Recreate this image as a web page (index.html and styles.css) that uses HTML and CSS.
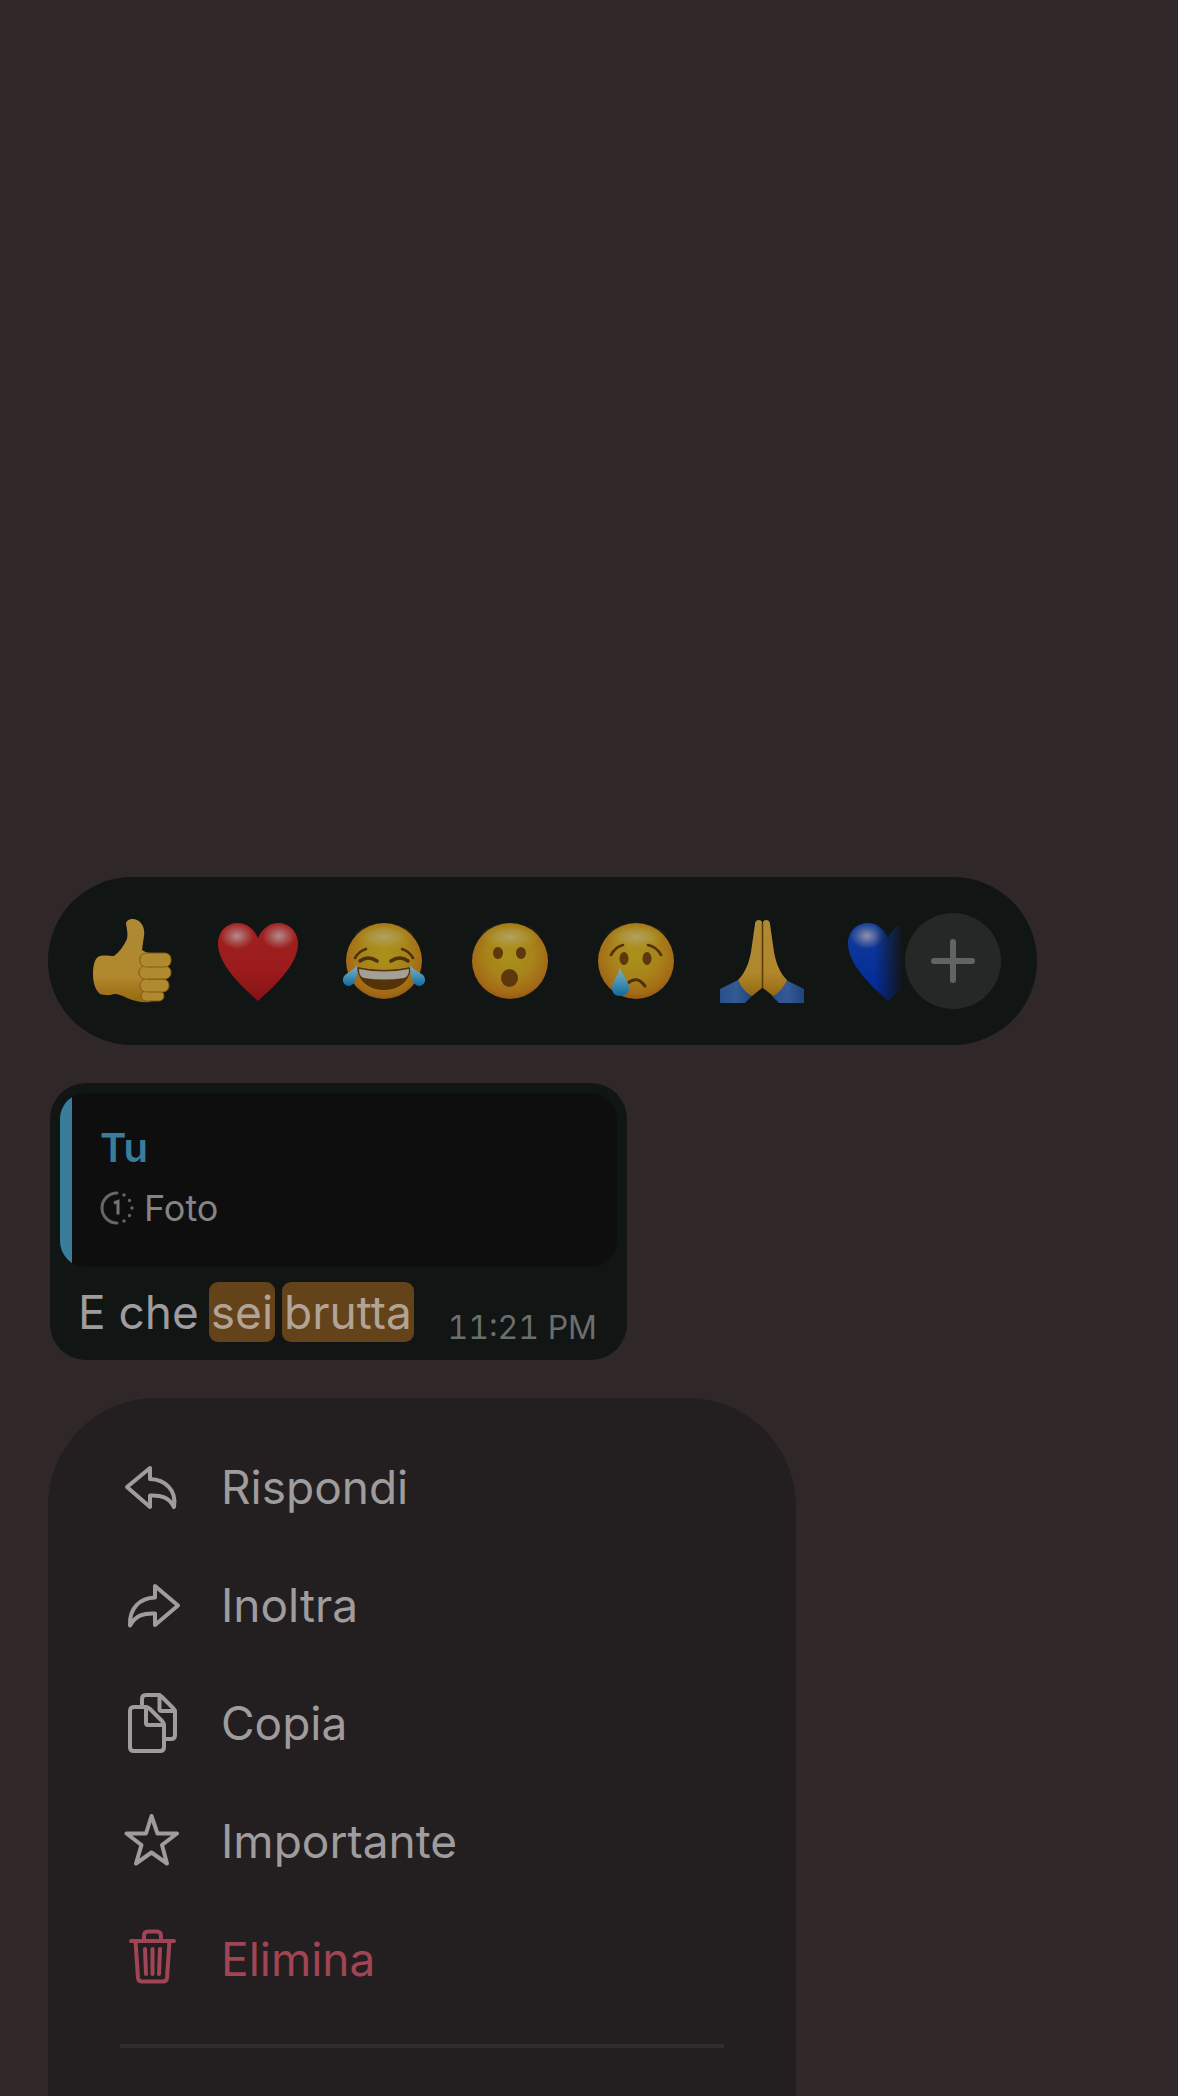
FILE: index.html
```
<!DOCTYPE html>
<html lang="it">
<head>
  <meta charset="UTF-8" />
  <meta name="viewport" content="width=device-width, initial-scale=1.0"/>
  <title>Chat</title>
  <link rel="stylesheet" href="styles.css">
</head>
<body>

  <!-- Shared gradients and shapes -->
  <svg class="defs" width="0" height="0" aria-hidden="true">
    <defs>
      <radialGradient id="face" cx="50%" cy="42%" r="60%">
        <stop offset="0" stop-color="#a8921a"/>
        <stop offset="0.5" stop-color="#a8841a"/>
        <stop offset="0.85" stop-color="#a36a16"/>
        <stop offset="1" stop-color="#8f5615"/>
      </radialGradient>
      <radialGradient id="shine">
        <stop offset="0" stop-color="#b3a673" stop-opacity="0.85"/>
        <stop offset="0.5" stop-color="#b0a050" stop-opacity="0.5"/>
        <stop offset="1" stop-color="#a99412" stop-opacity="0"/>
      </radialGradient>
      <linearGradient id="skin" x1="0" y1="0" x2="0" y2="1">
        <stop offset="0" stop-color="#ae8a35"/>
        <stop offset="0.7" stop-color="#b0872c"/>
        <stop offset="1" stop-color="#96680f"/>
      </linearGradient>
      <linearGradient id="red" x1="0" y1="0" x2="0" y2="1">
        <stop offset="0" stop-color="#a0201f"/>
        <stop offset="0.6" stop-color="#9c1b1c"/>
        <stop offset="1" stop-color="#851315"/>
      </linearGradient>
      <linearGradient id="blue" x1="0" y1="0" x2="0" y2="1">
        <stop offset="0" stop-color="#103c98"/>
        <stop offset="1" stop-color="#02289a"/>
      </linearGradient>
      <radialGradient id="gloss">
        <stop offset="0" stop-color="#bdb0b2" stop-opacity="0.75"/>
        <stop offset="0.5" stop-color="#bdb0b2" stop-opacity="0.35"/>
        <stop offset="1" stop-color="#bdb0b2" stop-opacity="0"/>
      </radialGradient>
      <linearGradient id="tear" x1="0" y1="0" x2="0" y2="1">
        <stop offset="0" stop-color="#8badb4"/>
        <stop offset="0.5" stop-color="#4a93b4"/>
        <stop offset="1" stop-color="#11699f"/>
      </linearGradient>
      <linearGradient id="sleeve" x1="0" y1="0" x2="1" y2="0">
        <stop offset="0" stop-color="#28508a"/>
        <stop offset="0.5" stop-color="#335a94"/>
        <stop offset="1" stop-color="#1f437c"/>
      </linearGradient>
      <path id="heart" d="M42 82C36 76 2 49 2 25C2 12 11 4 22 4C31 4 38 10 42 19C46 10 53 4 62 4C73 4 82 12 82 25C82 49 48 76 42 82Z"/>
    </defs>
  </svg>

  <main class="chat">

    <!-- Reactions -->
    <div class="reactions">
      <div class="reaction-list">
        <button class="reaction" aria-label="Mi piace">
          <svg viewBox="0 0 84 84">
            <path d="M36 5C36 0 43-1 47 1C53 4 55 10 54 17L52 31C56 34 60 34 64 34L64 80L60 83C52 84 44 82 37 79C31 76 28 75 24 75C19 77 13 76 10 75C5 71 3 63 3 55C3 46 5 38 10 37C15 36 20 37 24 37C29 33 34 27 37 20C38 15 37 10 36 5Z" fill="url(#skin)"/>
            <g fill="#b08a2e" stroke="#84590f" stroke-width="1">
              <rect x="51" y="72" width="23" height="10" rx="5"/>
              <rect x="50" y="60" width="29" height="13" rx="6"/>
              <rect x="49" y="47" width="32" height="13" rx="6"/>
              <rect x="50" y="34" width="31" height="14" rx="6"/>
            </g>
            <path d="M56 35V81" stroke="#b08a2e" stroke-width="2" opacity="0.5"/>
          </svg>
        </button>
        <button class="reaction" aria-label="Cuore rosso">
          <svg viewBox="0 0 84 84">
            <use href="#heart" fill="url(#red)"/>
            <ellipse cx="21" cy="17" rx="17" ry="13" fill="url(#gloss)"/>
            <ellipse cx="63" cy="17" rx="17" ry="13" fill="url(#gloss)"/>
          </svg>
        </button>
        <button class="reaction" aria-label="Risata">
          <svg viewBox="0 0 84 84">
            <circle cx="42" cy="42" r="38" fill="url(#face)"/>
            <ellipse cx="42" cy="18" rx="31" ry="14" fill="url(#shine)"/>
            <g fill="none" stroke="#4f300a" stroke-width="2.6" stroke-linecap="round">
              <path d="M13 39Q17 32 24 30"/>
              <path d="M60 30Q67 32 71 39"/>
              <path d="M18 42Q26 36 35 42" stroke-width="3.6"/>
              <path d="M49 42Q58 36 66 42" stroke-width="3.6"/>
            </g>
            <path d="M15 48Q42 54 69 48C68 62 57 71 42 71S16 62 15 48Z" fill="#553309"/>
            <path d="M17 50Q42 55 67 50Q67 58 62 59Q42 62 22 59Q17 58 17 50Z" fill="#a3a09a"/>
            <path d="M15 46C16 56 14 66 7 67C1 67-1 60 3 56C6 53 12 51 15 46Z" fill="url(#tear)"/>
            <path d="M68 46C68 56 70 66 77 67C83 67 85 60 81 56C78 53 71 51 68 46Z" fill="url(#tear)"/>
          </svg>
        </button>
        <button class="reaction" aria-label="Sorpresa">
          <svg viewBox="0 0 84 84">
            <circle cx="42" cy="42" r="38" fill="url(#face)"/>
            <ellipse cx="42" cy="18" rx="31" ry="14" fill="url(#shine)"/>
            <g fill="#5d380d">
              <ellipse cx="30" cy="34" rx="5" ry="6"/>
              <ellipse cx="53" cy="34" rx="5" ry="6"/>
              <ellipse cx="41.5" cy="59" rx="8.5" ry="9"/>
            </g>
          </svg>
        </button>
        <button class="reaction" aria-label="Pianto">
          <svg viewBox="0 0 84 84">
            <circle cx="42" cy="42" r="38" fill="url(#face)"/>
            <ellipse cx="42" cy="18" rx="31" ry="14" fill="url(#shine)"/>
            <g fill="none" stroke="#4f300a" stroke-width="2.6" stroke-linecap="round">
              <path d="M17 36Q21 28 29 26"/>
              <path d="M54 26Q63 28 67 36"/>
              <path d="M34 64Q43 56 51 67" stroke-width="3"/>
            </g>
            <ellipse cx="30" cy="39.5" rx="4.5" ry="6.5" fill="#5d380d"/>
            <ellipse cx="53" cy="39.5" rx="4.5" ry="6.5" fill="#5d380d"/>
            <path d="M26 48C28 56 35 62 35 69C35 74 31 77 26 77S18 74 18 69C18 62 25 56 26 48Z" fill="url(#tear)"/>
          </svg>
        </button>
        <button class="reaction" aria-label="Mani giunte">
          <svg viewBox="0 0 84 84">
            <path d="M0 70L18 61L32 77L25 84H0Z" fill="url(#sleeve)"/>
            <path d="M84 70L66 61L52 77L59 84H84Z" fill="url(#sleeve)"/>
            <path d="M35 5C35 0 41 0 42 3V69L32 77C26 74 21 68 18 61C26 53 29 43 31 33Z" fill="url(#skin)"/>
            <path d="M50 5C50 0 44 0 43 3V69L53 77C59 74 64 68 67 61C59 53 56 43 54 33Z" fill="url(#skin)"/>
            <path d="M42.5 4V69" stroke="#5f3a08" stroke-width="1.6"/>
          </svg>
        </button>
        <button class="reaction" aria-label="Cuore blu">
          <svg viewBox="0 0 84 84">
            <use href="#heart" fill="url(#blue)"/>
            <ellipse cx="21" cy="17" rx="17" ry="13" fill="url(#gloss)"/>
          </svg>
        </button>
      </div>
      <button class="more" aria-label="Altre reazioni">
        <svg viewBox="0 0 96 96">
          <path d="M48 29V67M29 48H67" fill="none" stroke="#626464" stroke-width="6" stroke-linecap="round"/>
        </svg>
      </button>
    </div>

    <!-- Selected message -->
    <article class="bubble">
      <div class="quote">
        <div class="quote-name">Tu</div>
        <div class="quote-text">
          <svg class="once" viewBox="0 0 34 34" aria-hidden="true">
            <path d="M17 2A15 15 0 0 0 17 32" fill="none" stroke="#676767" stroke-width="3" stroke-linecap="round"/>
            <path d="M14 12L18 10.500V23.500" fill="none" stroke="#747474" stroke-width="3"/>
            <g fill="#676767">
              <circle cx="24" cy="4" r="1.700"/>
              <circle cx="29.500" cy="9.500" r="1.700"/>
              <circle cx="32" cy="17" r="1.700"/>
              <circle cx="29.500" cy="24.500" r="1.700"/>
              <circle cx="24" cy="30" r="1.700"/>
            </g>
          </svg>
          <span>Foto</span>
        </div>
      </div>
      <div class="message">
        <p>E che <mark>sei</mark> <mark>brutta</mark></p>
        <time>11:21 PM</time>
      </div>
    </article>

    <!-- Context menu -->
    <div class="menu">
      <button class="menu-item">
        <svg viewBox="0 0 60 60"><path d="M29 11L6 30L29 50V38.500C40 38 48 40 53 50C56 33 44 22.500 29 22Z"/></svg>
        Rispondi
      </button>
      <button class="menu-item">
        <svg viewBox="0 0 60 60"><path d="M34 11L57 30.500L34 50V38.500C23 38 15 40 9 50.500C8 33 19 23 34 22.500Z"/></svg>
        Inoltra
      </button>
      <button class="menu-item">
        <svg viewBox="0 0 60 60">
          <path d="M21 13V6Q21 2 25 2H37Q39 2 41 4L52 15Q54 17 54 19V42Q54 46 50 46H44"/>
          <path d="M38.500 2V16Q38.500 18 40.500 18H54"/>
          <path d="M14 14H25Q27 14 29 16L41 28Q43 30 43 32V54Q43 58 39 58H13Q9 58 9 54V18Q9 14 13 14Z"/>
          <path d="M25 14V30Q25 32 27 32H43"/>
        </svg>
        Copia
      </button>
      <button class="menu-item">
        <svg viewBox="0 0 60 60"><path d="M30.500 5L36.500 22.500H56L41 34L46 52.500L30.500 41.500L15 52.500L20.500 34L5.500 22.500H25Z"/></svg>
        Importante
      </button>
      <button class="menu-item delete">
        <svg viewBox="0 0 60 60">
          <path d="M10 12H53M23 12V7Q23 2.500 27 2.500H36Q40 2.500 40 7V12"/>
          <path d="M14.500 12L17 49Q17.500 52.500 21 52.500H42Q45.500 52.500 46 49L48.500 12"/>
          <path d="M24 20L25 45M31.500 20V45M39 20L38 45"/>
        </svg>
        Elimina
      </button>
      <hr>
    </div>

  </main>

</body>
</html>
```
FILE: styles.css
```
* {
  box-sizing: border-box;
}

body {
  margin: 0;
  font-family: Inter, "Liberation Sans", sans-serif;
  background: #302729;
  color: #9f9c9d;
}

button {
  border: none;
  padding: 0;
  background: none;
  color: inherit;
  font: inherit;
  cursor: pointer;
}

svg {
  display: block;
}

.defs {
  position: absolute;
}

.chat {
  display: flex;
  flex-direction: column;
  align-items: flex-start;
  min-height: 100vh;
  padding: 877px 48px 0;
}

/* Reactions */
.reactions {
  display: flex;
  align-items: center;
  width: 100%;
  max-width: 989px;
  padding: 36px 36px 36px 42px;
  border-radius: 84px;
  background: #111514;
}

.reaction-list {
  display: flex;
  flex: 1;
  gap: 42px;
  min-width: 0;
  overflow: hidden;
  -webkit-mask-image: linear-gradient(to left, transparent 2px, #000 30px);
  mask-image: linear-gradient(to left, transparent 2px, #000 30px);
}

.reaction {
  flex: none;
  width: 84px;
  height: 84px;
}

.reaction svg {
  overflow: visible;
}

.more {
  flex: none;
  width: 96px;
  height: 96px;
  border-radius: 50%;
  background: #252827;
}

/* Message bubble */
.bubble {
  width: 100%;
  max-width: 577px;
  margin: 38px 2px;
  padding: 10px;
  border-radius: 36px;
  background: #111514;
}

.quote {
  padding: 30px 28px 36px 40px;
  border-radius: 26px;
  background: linear-gradient(to right, #387e9b 12px, #0e0e0e 12px);
}

.quote-name {
  font-size: 40px;
  font-weight: 600;
  line-height: 50px;
  color: #387e9b;
}

.quote-text {
  display: flex;
  align-items: center;
  gap: 10px;
  margin-top: 12px;
  font-size: 36px;
  line-height: 46px;
  color: #848484;
}

.once {
  width: 34px;
  height: 34px;
}

.message {
  display: flex;
  justify-content: space-between;
  align-items: flex-end;
  padding: 15px 20px 4px 18px;
}

.message p {
  margin: 0 0 4px;
  font-size: 46px;
  line-height: 60px;
  white-space: nowrap;
}

mark {
  display: inline-block;
  margin: 0 -3px;
  padding: 0 2px;
  border-radius: 9px;
  background: #64421a;
  color: #b0a496;
}

time {
  font-size: 32px;
  font-variant-numeric: tabular-nums;
  line-height: 36px;
  white-space: nowrap;
  color: #6c6e6d;
}

/* Context menu */
.menu {
  flex: 1;
  width: 100%;
  max-width: 748px;
  padding: 30px 72px 0;
  border-radius: 108px 108px 0 0;
  background: #231f20;
}

.menu-item {
  display: flex;
  align-items: center;
  gap: 40px;
  width: 100%;
  height: 118px;
  padding-left: 1px;
  font-size: 46px;
  text-align: left;
}

.menu-item svg {
  width: 60px;
  height: 60px;
  fill: none;
  stroke: currentColor;
  stroke-width: 4;
  stroke-linejoin: round;
  stroke-linecap: round;
}

.delete {
  color: #a14453;
}

hr {
  height: 4px;
  margin: 26px 0 0;
  border: none;
  background: #302d2e;
}
```
